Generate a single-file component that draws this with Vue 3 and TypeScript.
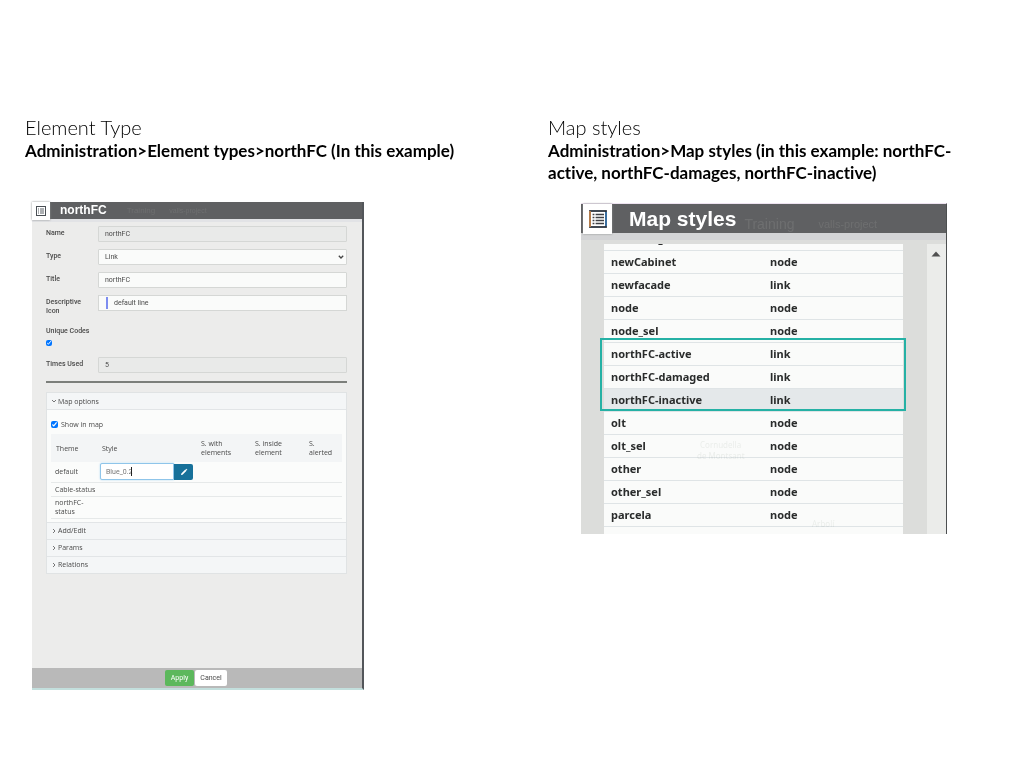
<script setup lang="ts">
import { ref } from 'vue'

interface StyleRow {
  name: string
  kind: string
}

const rows: StyleRow[] = [
  { name: 'microring', kind: 'node' },
  { name: 'newCabinet', kind: 'node' },
  { name: 'newfacade', kind: 'link' },
  { name: 'node', kind: 'node' },
  { name: 'node_sel', kind: 'node' },
  { name: 'northFC-active', kind: 'link' },
  { name: 'northFC-damaged', kind: 'link' },
  { name: 'northFC-inactive', kind: 'link' },
  { name: 'olt', kind: 'node' },
  { name: 'olt_sel', kind: 'node' },
  { name: 'other', kind: 'node' },
  { name: 'other_sel', kind: 'node' },
  { name: 'parcela', kind: 'node' },
  { name: 'parcela_sel', kind: 'node' },
]

const sections: string[] = ['Add/Edit', 'Params', 'Relations']
const name = ref('northFC')
const type = ref('Link')
const title = ref('northFC')
const icon = ref('default line')
const times = ref('5')
const unique = ref(true)
const shown = ref(true)
const themeStyle = ref('Blue_0.2')
</script>

<template>
  <main class="page">
    <section class="column">
      <h1>Element Type</h1>
      <p class="path">Administration&gt;Element types&gt;northFC (In this example)</p>

      <div class="window element">
        <header class="bar">
          <button class="menu" type="button" aria-label="Menu">
            <svg viewBox="0 0 10 10">
              <rect x="0.5" y="0.5" width="9" height="9" fill="#fff" stroke="#4a4f54" />
              <path d="M2 3h1M2 5h1M2 7h1M4 3h4M4 5h4M4 7h4" stroke="#5a6066" stroke-width="1" />
            </svg>
          </button>
          <h2>northFC</h2>
          <span class="ghost">Training</span>
          <span class="ghost">valls-project</span>
        </header>

        <form class="form" @submit.prevent>
          <div class="field">
            <label for="f-name">Name</label>
            <input id="f-name" v-model="name" type="text" readonly />
          </div>
          <div class="field">
            <label for="f-type">Type</label>
            <div class="select">
              <select id="f-type" v-model="type">
                <option>Link</option>
                <option>Node</option>
              </select>
              <svg viewBox="0 0 8 6"><path d="M1.8 1.8 4 4 6.2 1.8" fill="none" stroke="#444" stroke-width="1.3" /></svg>
            </div>
          </div>
          <div class="field">
            <label for="f-title">Title</label>
            <input id="f-title" v-model="title" type="text" />
          </div>
          <div class="field tall">
            <label for="f-icon">Descriptive Icon</label>
            <div class="swatch">
              <i></i>
              <input id="f-icon" v-model="icon" type="text" />
            </div>
          </div>
          <div class="unique">
            <label for="f-unique">Unique Codes</label>
            <input id="f-unique" v-model="unique" type="checkbox" />
          </div>
          <div class="field">
            <label for="f-times">Times Used</label>
            <input id="f-times" v-model="times" type="text" readonly />
          </div>

          <hr />

          <div class="accordion">
            <button class="head open" type="button">
              <svg viewBox="0 0 6 6"><path d="M1 2l2 2 2-2" fill="none" stroke="#555" stroke-width="0.8" /></svg>
              Map options
            </button>
            <div class="content">
              <label class="show"><input v-model="shown" type="checkbox" />Show in map</label>
              <table class="themes">
                <thead>
                  <tr>
                    <th class="c-theme">Theme</th>
                    <th class="c-style">Style</th>
                    <th class="c-with">S. with elements</th>
                    <th class="c-inside">S. inside element</th>
                    <th>S. alerted</th>
                  </tr>
                </thead>
                <tbody>
                  <tr class="editing">
                    <td>default</td>
                    <td colspan="4">
                      <div class="group">
                        <input v-model="themeStyle" type="text" aria-label="Style" />
                        <i class="caret"></i>
                        <button type="button" aria-label="Edit style">
                          <svg viewBox="0 0 10 10"><path d="M1.2 8.8 1.7 6.8 6.6 1.9 8.1 3.4 3.2 8.3zM7 1.5l.7-.7 1.5 1.5-.7.7z" fill="#fff" /></svg>
                        </button>
                      </div>
                    </td>
                  </tr>
                  <tr class="cable"><td colspan="5">Cable-status</td></tr>
                  <tr class="north"><td>northFC-status</td><td colspan="4"></td></tr>
                </tbody>
              </table>
            </div>
            <button v-for="s in sections" :key="s" class="head" type="button">
              <svg viewBox="0 0 6 6"><path d="M2 1l2 2-2 2" fill="none" stroke="#555" stroke-width="0.8" /></svg>
              {{ s }}
            </button>
          </div>
        </form>

        <footer class="actions">
          <button class="apply" type="button">Apply</button>
          <button class="cancel" type="button">Cancel</button>
        </footer>
      </div>
    </section>

    <section class="column">
      <h1>Map styles</h1>
      <p class="path">Administration&gt;Map styles (in this example: northFC-active, northFC-damages, northFC-inactive)</p>

      <div class="window styles">
        <header class="bar">
          <button class="menu" type="button" aria-label="Menu">
            <svg viewBox="0 0 18 18">
              <rect x="1" y="1" width="16" height="16" fill="#fff" stroke="#2d3540" stroke-width="1.8" />
              <path d="M1 1v16" stroke="#d08a4c" stroke-width="1.6" />
              <path d="M17 2v14" stroke="#3979b5" stroke-width="1.6" />
              <path d="M3.6 4.5h1.8M3.6 7.5h1.8M3.6 10.5h1.8M3.6 13.5h1.8M6.6 4.5h8.4M6.6 7.5h8.4M6.6 10.5h8.4M6.6 13.5h8.4" stroke="#3f4045" stroke-width="1.5" />
            </svg>
          </button>
          <h2>Map styles</h2>
          <span class="ghost">Training</span>
          <span class="ghost">valls-project</span>
        </header>
        <div class="viewport">
          <div class="listing">
            <table>
              <tbody>
                <tr v-for="r in rows" :key="r.name" :class="{ hover: r.name === 'northFC-inactive' }">
                  <td>{{ r.name }}</td>
                  <td>{{ r.kind }}</td>
                </tr>
              </tbody>
            </table>
            <svg class="terrain" aria-hidden="true">
              <g fill="#f0f2f0">
                <text x="96" y="204">Cornudella</text>
                <text x="93" y="215">de Montsant</text>
                <text x="208" y="283">Arbolí</text>
              </g>
            </svg>
            <div class="highlight"></div>
          </div>
          <div class="track">
            <svg viewBox="0 0 10 6"><path d="M5 0.5 9.5 5.5h-9z" fill="#505050" /></svg>
          </div>
        </div>
      </div>
    </section>
  </main>
</template>

<style>
body {
  margin: 0;
  background: #fff;
}
</style>

<style scoped>
* {
  box-sizing: border-box;
}
.page {
  display: grid;
  grid-template-columns: 523fr 451fr;
  padding: 115px 25px 40px;
  color: #000;
  font-variant-ligatures: none;
}
h1 {
  margin: 0;
  font-family: Lato, sans-serif;
  font-size: 20px;
  font-weight: 300;
  line-height: 25px;
}
.path {
  margin: 0 33px 0 0;
  min-height: 62px;
  font-family: Lato, sans-serif;
  font-size: 17px;
  font-weight: 700;
  line-height: 22px;
}
button {
  font: inherit;
  color: inherit;
  padding: 0;
  border: 0;
  background: none;
}
input,
select {
  font: inherit;
  color: inherit;
  min-width: 0;
  margin: 0;
}
svg {
  display: block;
}
.bar {
  display: flex;
  align-items: center;
  background: #5f6062;
}
.bar h2 {
  margin: 0;
  color: #fff;
  font-family: "Liberation Sans", Arial, sans-serif;
  font-weight: 700;
}
.ghost {
  color: #6e6f70;
  font-family: "Liberation Sans", Arial, sans-serif;
}
.menu {
  display: grid;
  place-items: center;
  align-self: flex-start;
  background: #fff;
  box-shadow: 0 0 2px #8a8b8d;
}

/* Element type window */
.element {
  margin: 0 184px 0 7px;
  border-right: 2px solid #53565a;
  border-bottom: 2px solid #c3dfdd;
  background: #ececeb;
  font-family: Roboto, sans-serif;
  font-size: 7px;
  line-height: 9px;
  color: #4a4a4a;
}
.element .bar {
  height: 17px;
}
.element .menu {
  width: 18px;
  height: 18px;
}
.element .menu svg {
  width: 10px;
  height: 10px;
}
.element h2 {
  margin: 0 20px 0 10px;
  font-size: 12px;
}
.element .ghost {
  margin-right: 14px;
  font-size: 8px;
}
.element .ghost:last-child {
  font-size: 7px;
}
.form {
  padding: 4px 15px 0 14px;
  border-top: 3px solid #e2e3e6;
  min-height: 449px;
}
.field {
  display: grid;
  grid-template-columns: 52px 1fr;
  align-items: start;
  height: 23px;
}
.field.tall {
  height: 32px;
}
.field label,
.unique label {
  font-weight: 500;
  padding-right: 8px;
}
.field label {
  padding-top: 3px;
}
.field input,
.field select {
  width: 100%;
  height: 16px;
  padding: 0 6px;
  border: 1px solid #d5d7d5;
  border-radius: 1px;
  background: #fafbfa;
}
.field input[readonly] {
  background: #e9eae9;
}
.select {
  position: relative;
}
.field select {
  appearance: none;
}
.select svg {
  position: absolute;
  right: 2px;
  top: 5px;
  width: 8px;
  height: 6px;
}
.swatch {
  display: flex;
  align-items: center;
  height: 16px;
  padding-left: 7px;
  border: 1px solid #d5d7d5;
  background: #fafbfa;
}
.swatch i {
  width: 2px;
  height: 12px;
  background: #7d8df0;
}
.swatch input {
  height: 14px;
  border: 0;
}
.unique {
  height: 30px;
}
.unique label,
.unique input {
  display: block;
}
.unique input {
  width: 6px;
  height: 6px;
  margin-top: 4px;
}
hr {
  margin: 1px 0 9px;
  border: 0;
  border-top: 2px solid #7c7f7b;
}
.accordion {
  border: 1px solid #e0e3e4;
  background: #fbfcfb;
  font-family: "Open Sans", "Noto Sans", sans-serif;
}
.head {
  display: flex;
  align-items: center;
  gap: 1px;
  width: 100%;
  height: 17px;
  padding-left: 4px;
  background: #f4f6f7;
  border-top: 1px solid #e2e5e7;
}
.head.open {
  border-top: 0;
  border-bottom: 1px solid #e2e5e7;
}
.head svg {
  width: 6px;
  height: 6px;
}
.content {
  padding: 9px 4px 3px;
}
.show {
  display: flex;
  align-items: center;
  gap: 3px;
  height: 10px;
  margin-bottom: 5px;
}
.show input {
  width: 7px;
  height: 7px;
}
.themes {
  width: 100%;
  border-collapse: collapse;
  table-layout: fixed;
}
.themes th {
  height: 28px;
  padding: 0 5px;
  background: #f3f5f6;
  font-weight: 400;
  text-align: left;
}
.c-theme {
  width: 46px;
}
.c-style {
  width: 99px;
}
.c-with,
.c-inside {
  width: 54px;
}
.themes td {
  padding: 0 4px;
  border-bottom: 1px solid #e6e9e9;
}
.editing {
  height: 20px;
}
.cable {
  height: 14px;
}
.north {
  height: 22px;
}
.group {
  display: flex;
  align-items: center;
  position: relative;
  width: 93px;
  height: 17px;
}
.group input {
  width: 74px;
  height: 17px;
  padding: 0 5px;
  border: 1px solid #8fc5ea;
  border-radius: 2px 0 0 2px;
  background: #fff;
  box-shadow: 0 0 2px #a8d3f0;
  font-family: Roboto, sans-serif;
  color: #777;
}
.group .caret {
  position: absolute;
  left: 31px;
  width: 1px;
  height: 9px;
  background: #222;
}
.group button {
  display: grid;
  place-items: center;
  width: 19px;
  height: 16px;
  border-radius: 0 2px 2px 0;
  background: #17719a;
}
.group svg {
  width: 8px;
  height: 8px;
}
.themes .editing td:last-child {
  padding: 0 3px;
}
.actions {
  display: flex;
  justify-content: center;
  align-items: center;
  gap: 1px;
  height: 20px;
  padding-right: 2px;
  background: #b9b9b9;
}
.actions button {
  height: 16px;
  border-radius: 2px;
}
.apply {
  width: 29px;
  background: #5cb85c;
  color: #fff;
}
.cancel {
  width: 32px;
  background: #fff;
}

/* Map styles window */
.styles {
  margin: 1px 52px 0 33px;
  border-top: 1px solid #eee3f1;
  border-right: 1px solid #4c4f50;
  background: #dcdddb;
}
.styles .bar {
  height: 29px;
  padding-left: 2px;
}
.styles .menu {
  width: 29px;
  height: 30px;
}
.styles .menu svg {
  width: 18px;
  height: 18px;
}
.styles h2 {
  margin: 0 8px 0 17px;
  font-size: 21px;
  line-height: 26px;
}
.styles .ghost {
  margin: 10px 24px 0 0;
  font-size: 14px;
}
.styles .ghost:last-child {
  font-size: 11px;
}
.viewport {
  display: flex;
  justify-content: space-between;
  height: 301px;
  border-top: 7px solid #d3d4d6;
  overflow: hidden;
}
.listing {
  position: relative;
  flex: 1;
  margin: 4px 24px 0 23px;
}
.listing table {
  width: 100%;
  margin-top: -17px;
  border-collapse: collapse;
  table-layout: fixed;
  background: #fafbfa;
  clip-path: inset(17px 0 0 0);
  font-family: "Noto Sans", sans-serif;
  font-size: 11px;
  font-weight: 700;
  line-height: 20px;
  color: #2a2c2c;
}
.listing td {
  height: 23px;
  padding: 1px 7px;
  border-bottom: 1px solid #dfe4e6;
}
.listing td:first-child {
  width: 159px;
}
.hover {
  background: #e4e8ea;
}
.terrain {
  position: absolute;
  inset: 0;
  width: 100%;
  height: 100%;
  mix-blend-mode: multiply;
  pointer-events: none;
  font-family: "Noto Sans", sans-serif;
  font-size: 8px;
}
.highlight {
  position: absolute;
  top: 94px;
  left: -4px;
  right: -3px;
  height: 73px;
  border: 2px solid #25b1a5;
}
.track {
  width: 19px;
  margin-top: 4px;
  padding: 7px 4px;
  background: #ebecea;
}
.track svg {
  width: 10px;
  height: 6px;
}
</style>
